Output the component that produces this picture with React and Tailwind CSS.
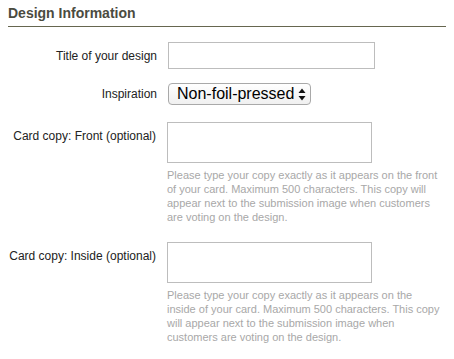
export default function App() {
  const font = { fontFamily: '"Liberation Sans", Arial, Helvetica, sans-serif' };
  return (
    <div className="w-[454px] h-[359px] bg-white px-2 pt-[5px] overflow-hidden" style={font}>
      <h2 className="text-[14px] font-bold text-[#4b4b3f] leading-[16px] pb-[5px] border-b border-[#66664f]">
        Design Information
      </h2>
      <div className="mt-[15px] flex items-center">
        <label className="w-[149px] text-right text-[12px] text-[#222]">Title of your design</label>
        <input type="text" className="ml-[11px] w-[207px] h-[27px] border border-[#bdbdbd] bg-white outline-none" />
      </div>
      <div className="mt-[14px] flex items-center">
        <label className="w-[149px] text-right text-[12px] text-[#222]">Inspiration</label>
        <div className="ml-[11px] w-[143px] h-[22px] border border-[#a9a9a9] rounded-[4px] bg-gradient-to-b from-white to-[#f0f0f0] flex items-center pl-[8px] pr-[4px] justify-between">
          <span className="text-[16px] text-black leading-[20px]">Non-foil-pressed</span>
          <svg width="8" height="13" viewBox="0 0 8 13">
            <path d="M4 0.5 L7.5 5 L0.5 5 Z" fill="#111" />
            <path d="M4 12.5 L7.5 8 L0.5 8 Z" fill="#111" />
          </svg>
        </div>
      </div>
      <div className="mt-[17px] flex items-start">
        <label className="w-[149px] text-right text-[12px] text-[#222] pt-[5px]">Card copy: Front (optional)</label>
        <div className="ml-[11px]">
          <textarea className="block w-[205px] h-[41px] border border-[#bdbdbd] bg-white outline-none resize-none" />
          <p className="mt-[5px] w-[279px] text-[11px] leading-[14px] text-[#a8a8a8]">
            Please type your copy exactly as it appears on the front of your card. Maximum 500 characters. This copy will appear next to the submission image when customers are voting on the design.
          </p>
        </div>
      </div>
      <div className="mt-[18px] flex items-start">
        <label className="w-[149px] text-right text-[12px] text-[#222] pt-[5px]">Card copy: Inside (optional)</label>
        <div className="ml-[11px]">
          <textarea className="block w-[205px] h-[41px] border border-[#bdbdbd] bg-white outline-none resize-none" />
          <p className="mt-[5px] w-[279px] text-[11px] leading-[14px] text-[#a8a8a8] whitespace-nowrap">
            <span className="block">Please type your copy exactly as it appears on the</span>
            <span className="block">inside of your card. Maximum 500 characters. This copy</span>
            <span className="block">will appear next to the submission image when</span>
            <span className="block">customers are voting on the design.</span>
          </p>
        </div>
      </div>
    </div>
  );
}
